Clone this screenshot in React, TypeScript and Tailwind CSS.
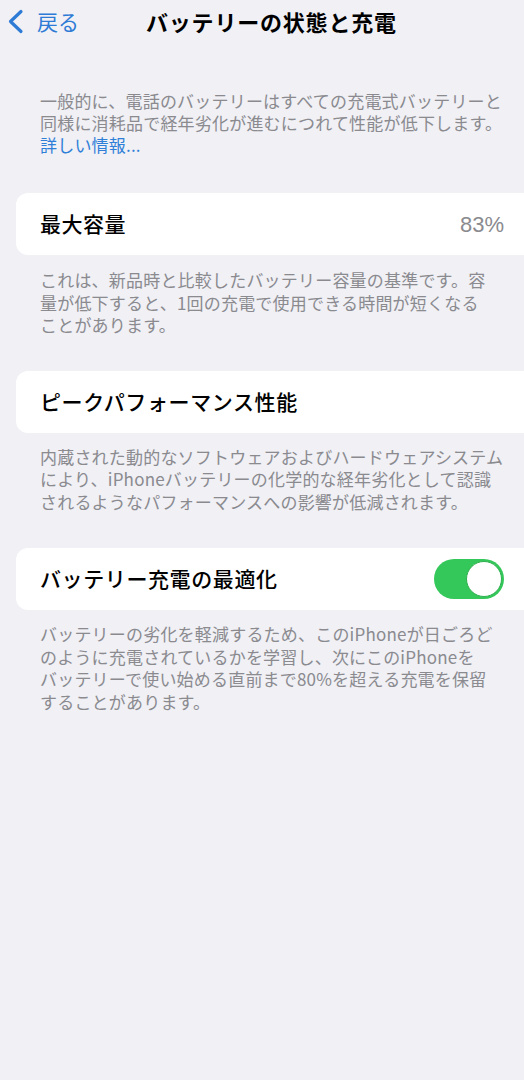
import React, { useState } from "react";

const sans = "font-['Noto_Sans_CJK_JP','Noto_Sans',sans-serif]";

const Footer = ({ lines }: { lines: string[] }) => (
  <div className="pl-10 pr-4 text-[17px] leading-[22.5px] text-[#8a8a8f] tracking-[0.2px]">
    {lines.map((l, i) => (
      <div key={i} className="whitespace-nowrap">
        {l}
      </div>
    ))}
  </div>
);

const Row = ({ children }: { children: React.ReactNode }) => (
  <div className="ml-4 h-[62px] bg-white rounded-l-xl flex items-center pl-6 pr-[20px]">
    {children}
  </div>
);

const App = () => {
  const [optimized, setOptimized] = useState(true);

  return (
    <div className={`${sans} min-h-[1080px] w-[524px] bg-[#f0f0f5] text-black overflow-hidden`}>
      {/* nav bar */}
      <div className="h-[42px] flex items-center">
        <button className="flex items-center pl-[7px] text-[#2e7bd6]">
          <svg width="17" height="25" viewBox="0 0 17 25" fill="none">
            <path d="M14 2.5L3.5 12.5L14 22.5" stroke="#2e7bd6" strokeWidth="3.2" strokeLinecap="round" strokeLinejoin="round" />
          </svg>
          <span className="ml-[13px] text-[21px] leading-none">戻る</span>
        </button>
        <h1 className="ml-[67px] text-[22px] font-bold leading-none tracking-[0.8px]">バッテリーの状態と充電</h1>
      </div>

      <div className="pt-[48px] pl-10 pr-4 text-[17px] leading-[22px] text-[#8a8a8f] tracking-[0.2px]">
        <div className="whitespace-nowrap">一般的に、電話のバッテリーはすべての充電式バッテリーと</div>
        <div className="whitespace-nowrap">同様に消耗品で経年劣化が進むにつれて性能が低下します。</div>
        <div className="text-[#2f7fd8]">詳しい情報...</div>
      </div>

      <div className="mt-[37px]">
        <Row>
          <span className="text-[21px] font-medium tracking-[0.5px]">最大容量</span>
          <span className="ml-auto text-[22px] text-[#8a8a8f] font-['Liberation_Sans',sans-serif]">83%</span>
        </Row>
      </div>

      <div className="mt-[14px]">
        <Footer
          lines={[
            "これは、新品時と比較したバッテリー容量の基準です。容",
            "量が低下すると、1回の充電で使用できる時間が短くなる",
            "ことがあります。",
          ]}
        />
      </div>

      <div className="mt-[34px]">
        <Row>
          <span className="text-[21px] font-medium tracking-[0.6px]">ピークパフォーマンス性能</span>
        </Row>
      </div>

      <div className="mt-[13px]">
        <Footer
          lines={[
            "内蔵された動的なソフトウェアおよびハードウェアシステム",
            "により、iPhoneバッテリーの化学的な経年劣化として認識",
            "されるようなパフォーマンスへの影響が低減されます。",
          ]}
        />
      </div>

      <div className="mt-[35px]">
        <Row>
          <span className="text-[21px] font-medium tracking-[0.6px]">バッテリー充電の最適化</span>
          <button
            onClick={() => setOptimized(!optimized)}
            className={`ml-auto w-[70px] h-[40px] rounded-full p-[2px] flex items-center ${
              optimized ? "bg-[#34c759] justify-end" : "bg-[#e5e5ea] justify-start"
            }`}
          >
            <span className="w-[36px] h-[36px] rounded-full bg-white border border-[#2fb04f]" />
          </button>
        </Row>
      </div>

      <div className="mt-[13px]">
        <Footer
          lines={[
            "バッテリーの劣化を軽減するため、このiPhoneが日ごろど",
            "のように充電されているかを学習し、次にこのiPhoneを",
            "バッテリーで使い始める直前まで80%を超える充電を保留",
            "することがあります。",
          ]}
        />
      </div>
    </div>
  );
};

export default App;
